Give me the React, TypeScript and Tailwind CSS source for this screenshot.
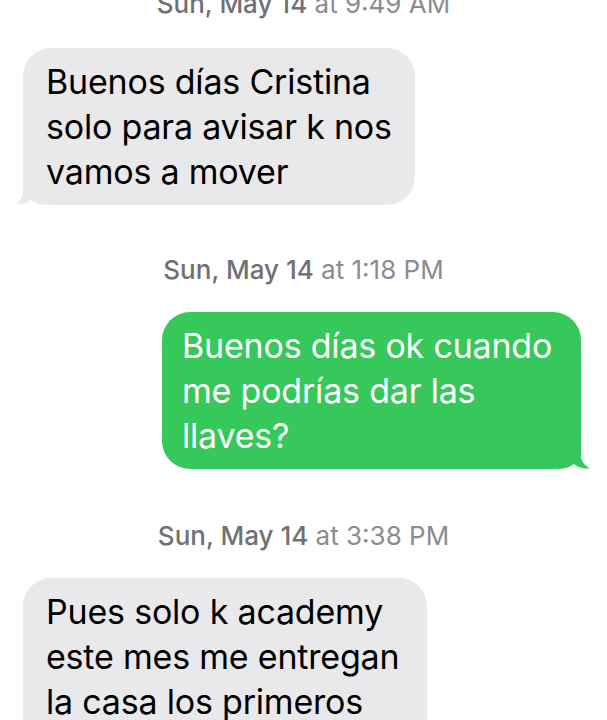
import React from "react";

function Stamp({ day, time, className = "" }: { day: string; time: string; className?: string }) {
  return (
    <div className={`text-center text-[26px] leading-[30px] ${className}`}>
      <span className="font-medium text-[#707075]">{day}</span>
      <span className="text-[#8b8b90]"> at {time}</span>
    </div>
  );
}

function GrayTail() {
  return (
    <svg className="absolute left-[-7px] bottom-0" width="32" height="26" viewBox="0 0 32 26">
      <path d="M7 0 L7 12 C7 18 4 22 0 25.5 C6 26 11 24 15 21 C19 24 24 26 32 26 L32 0 Z" fill="#e9e9eb" />
    </svg>
  );
}

function GreenTail() {
  return (
    <svg className="absolute right-[-9px] bottom-0" width="34" height="26" viewBox="0 0 34 26">
      <path d="M25 0 L25 12 C25 18 28 22 34 25.5 C27 26 21 24 18 21 C14 24 9 26 0 26 L0 0 Z" fill="#36c85a" />
    </svg>
  );
}

export default function App() {
  return (
    <div
      className="w-[607px] h-[720px] overflow-hidden bg-white"
      style={{ fontFamily: "Inter, 'Liberation Sans', sans-serif" }}
    >
      <Stamp day="Sun, May 14" time="9:49 AM" className="-mt-[11px]" />

      <div className="mt-[29px] pl-[23px]">
        <div className="relative w-[392px] rounded-[28px] bg-[#e9e9eb] px-[23px] py-[11px] text-[34px] leading-[45px] tracking-[-0.2px] text-black">
          <GrayTail />
          <div className="relative">
            Buenos días Cristina
            <br />
            solo para avisar k nos
            <br />
            vamos a mover
          </div>
        </div>
      </div>

      <Stamp day="Sun, May 14" time="1:18 PM" className="mt-[50px]" />

      <div className="mt-[27px] flex justify-end pr-[26px]">
        <div className="relative w-[419px] rounded-[28px] bg-[#36c85a] px-[20px] py-[11px] text-[34px] leading-[45px] tracking-[-0.2px] text-white">
          <GreenTail />
          <div className="relative">
            Buenos días ok cuando
            <br />
            me podrías dar las
            <br />
            llaves?
          </div>
        </div>
      </div>

      <Stamp day="Sun, May 14" time="3:38 PM" className="mt-[52px]" />

      <div className="mt-[27px] pl-[23px]">
        <div className="relative w-[404px] rounded-[28px] bg-[#e9e9eb] px-[23px] py-[11px] text-[34px] leading-[45px] tracking-[-0.2px] text-black">
          <div className="relative">
            Pues solo k academy
            <br />
            este mes me entregan
            <br />
            la casa los primeros
            <br />
            días
          </div>
        </div>
      </div>
    </div>
  );
}
